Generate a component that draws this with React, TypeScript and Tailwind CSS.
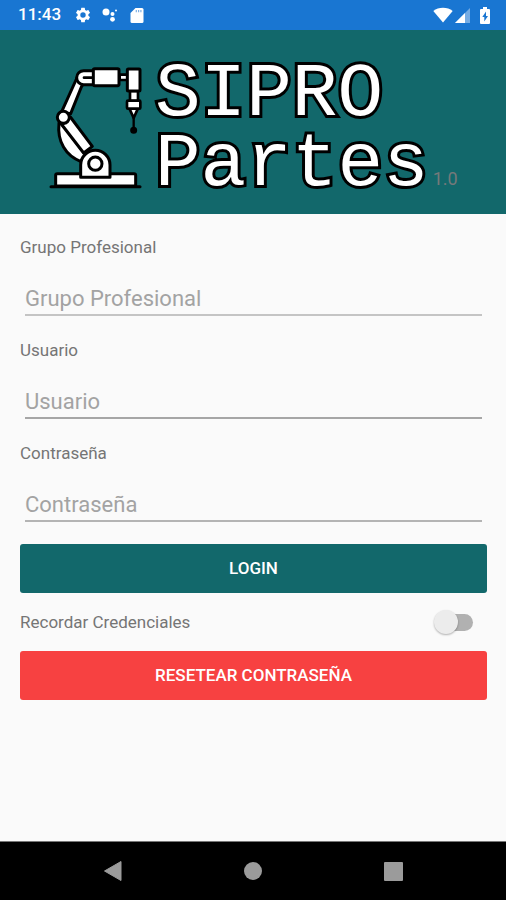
import { useState } from "react";

const FIELDS = [
  { id: "grupo", label: "Grupo Profesional", type: "text", line: "border-[#c4c4c4]" },
  { id: "usuario", label: "Usuario", type: "text", line: "border-[#a6a6a6]" },
  { id: "contrasena", label: "Contraseña", type: "password", line: "border-[#b4b4b4]" },
];

function StatusBar() {
  return (
    <div className="flex h-[30px] items-center bg-[#1976d2] pl-[18px] pr-4 text-white">
      <span className="text-[17px] font-medium">11:43</span>
      <svg viewBox="0 0 24 24" className="ml-[13px] size-[18px]" fill="currentColor">
        <path d="M19.14 12.94c.04-.3.06-.61.06-.94 0-.32-.02-.64-.07-.94l2.03-1.58a.49.49 0 0 0 .12-.61l-1.92-3.32a.49.49 0 0 0-.59-.22l-2.39.96c-.5-.38-1.03-.7-1.62-.94l-.36-2.54a.48.48 0 0 0-.48-.41h-3.84a.47.47 0 0 0-.47.41l-.36 2.54c-.59.24-1.13.57-1.62.94l-2.39-.96a.48.48 0 0 0-.59.22L2.74 8.87a.47.47 0 0 0 .12.61l2.03 1.58c-.05.3-.09.63-.09.94s.02.64.07.94l-2.03 1.58a.49.49 0 0 0-.12.61l1.92 3.32c.12.22.37.29.59.22l2.39-.96c.5.38 1.03.7 1.62.94l.36 2.54c.05.24.24.41.48.41h3.84c.24 0 .44-.17.47-.41l.36-2.54c.59-.24 1.13-.56 1.62-.94l2.39.96c.22.08.47 0 .59-.22l1.92-3.32a.47.47 0 0 0-.12-.61zM12 15.6a3.6 3.6 0 1 1 0-7.2 3.6 3.6 0 0 1 0 7.2z" />
      </svg>
      <svg viewBox="0 0 16 14" className="ml-2.5 h-3.5 w-4" fill="currentColor">
        <circle cx="4" cy="4" r="3.500" />
        <circle cx="10.500" cy="6" r="2" />
        <circle cx="10.500" cy="11.300" r="2.400" />
        <circle cx="14" cy="2.500" r="1" />
      </svg>
      <svg viewBox="0 0 14 17" className="ml-3 h-[17px] w-3.5" fill="currentColor">
        <path d="M5.5 1H12a1.5 1.5 0 0 1 1.5 1.5v12A1.5 1.5 0 0 1 12 16H2a1.5 1.5 0 0 1-1.5-1.5V6z" />
        <path d="M5.7 3h1.2v2.3H5.7zm2.3 0h1.2v2.3H8zm2.3 0h1.2v2.3h-1.2z" fill="#7fb0e4" />
      </svg>
      <div className="ml-auto flex items-center">
        <svg viewBox="0 0 20 16" className="h-4 w-5" fill="currentColor">
          <path d="M10 15.5.3 4C3 1.9 6.3.8 10 .8s7 1.1 9.700 3.200z" />
        </svg>
        <svg viewBox="0 0 15 15" className="ml-0.5 size-[15px]" fill="currentColor">
          <path d="M0 15 15 0v15z" opacity=".4" />
          <path d="M0 15 10 5v10z" />
        </svg>
        <svg viewBox="0 0 10 17" className="ml-2.5 h-[17px] w-2.5" fill="currentColor">
          <path d="M3 0h4v2h2a1 1 0 0 1 1 1v13a1 1 0 0 1-1 1H1a1 1 0 0 1-1-1V3a1 1 0 0 1 1-1h2z" />
          <path d="M6 4.5 2.3 10h2v4.5L8 9H6z" fill="#1976d2" />
        </svg>
      </div>
    </div>
  );
}

function RobotArm() {
  return (
    <svg
      viewBox="25 30 285 375"
      className="h-[125px] w-[95px] shrink-0"
      fill="#fff"
      stroke="#000"
      strokeWidth="9"
      strokeLinejoin="round"
      strokeLinecap="round"
    >
      <path d="M58 204c-6 56 20 98 66 116l14-20L68 208z" />
      <path d="M67 210 132 294l26-20L92 186z" />
      <path d="M113 66 65 172l28 4 32-80 14-22z" />
      <circle cx="71" cy="187" r="18" />
      <path d="M162 47h-30a20 20 0 0 0 0 42h30z" />
      <path d="M158 68h-25" strokeWidth="8" />
      <path d="M240 59h24v16h-24z" strokeWidth="8" />
      <rect x="161" y="41" width="77" height="51" rx="4" />
      <path d="M271 108h24v30h-24z" strokeWidth="8" />
      <rect x="263" y="42" width="38" height="66" rx="3" />
      <path d="m269 160 13 29 13-29z" strokeWidth="8" />
      <path d="M282 187v37" strokeWidth="7" />
      <rect x="262" y="137" width="40" height="24" rx="3" strokeWidth="8" />
      <circle cx="282" cy="226" r="6" fill="#000" />
      <path d="M48 393v-32q0-5 5-5h230q5 0 5 5v32z" />
      <path d="M123 367v-37a44 44 0 0 1 88 0v37z" />
      <circle cx="167" cy="326" r="20" />
      <path d="M34 395h267" />
    </svg>
  );
}

function Header() {
  return (
    <header className="flex h-[184px] items-start bg-[#12686b] pl-12 pt-[35px]">
      <RobotArm />
      <h1 className="ml-3 mt-[-5px] font-['Liberation_Mono',monospace] text-[76px] leading-[70px] text-white [-webkit-text-stroke:6px_#000] [paint-order:stroke_fill] [stroke-linejoin:round]">
        SIPRO
        <br />
        Partes
      </h1>
      <span className="ml-1 mt-[102px] text-lg leading-6 text-[#75797a]">1.0</span>
    </header>
  );
}

function RememberSwitch() {
  const [on, setOn] = useState(false);

  return (
    <div className="flex h-[58px] items-center justify-between pr-3.5">
      <label htmlFor="recordar" className="text-[17px] leading-6">
        Recordar Credenciales
      </label>
      <span className="relative flex h-6 w-[39px] items-center">
        <input
          id="recordar"
          type="checkbox"
          role="switch"
          checked={on}
          onChange={(e) => setOn(e.target.checked)}
          className="peer ml-1 h-[17px] w-[35px] appearance-none rounded-full bg-[#b1b1b1] checked:bg-[#12686b]/50"
        />
        <span className="pointer-events-none absolute left-0 top-0 size-6 rounded-full bg-[#ececec] shadow-[0_1px_2px_rgba(0,0,0,0.3)] peer-checked:left-[15px] peer-checked:bg-[#12686b]" />
      </span>
    </div>
  );
}

function NavBar() {
  return (
    <nav className="flex h-[59px] items-center justify-around border-t border-[#777] bg-black px-[42px] text-[#9b9b9b]">
      <button type="button" aria-label="Atrás">
        <svg viewBox="0 0 20 22" className="h-[22px] w-5" fill="currentColor">
          <path d="M18 1.500v19L1.500 11z" stroke="currentColor" strokeLinejoin="round" />
        </svg>
      </button>
      <button type="button" aria-label="Inicio" className="size-[18px] rounded-full bg-current" />
      <button type="button" aria-label="Recientes" className="size-[19px] rounded-[1px] bg-current" />
    </nav>
  );
}

export default function App() {
  return (
    <div className="flex min-h-screen flex-col bg-[#fafafa] font-[Roboto,sans-serif] text-[#757575]">
      <StatusBar />
      <Header />
      <main className="flex-1 pl-5 pr-[19px] pt-[21px]">
        <form onSubmit={(e) => e.preventDefault()}>
          {FIELDS.map((field) => (
            <div key={field.id} className="mb-[22px]">
              <label htmlFor={field.id} className="block text-[17px] leading-6">
                {field.label}
              </label>
              <div className="mt-[21px] px-[5px]">
                <input
                  id={field.id}
                  type={field.type}
                  placeholder={field.label}
                  className={`block h-9 w-full border-b-2 pt-0.5 text-[22px] text-[#212121] outline-none placeholder:text-[#a3a3a3] ${field.line}`}
                />
              </div>
            </div>
          ))}
          <button
            type="submit"
            className="block h-[49px] w-full rounded-[3px] bg-[#12686b] text-[17px] font-medium text-white"
          >
            LOGIN
          </button>
          <RememberSwitch />
          <button
            type="button"
            className="block h-[49px] w-full rounded-[3px] bg-[#f74141] text-[17px] font-medium text-white"
          >
            RESETEAR CONTRASEÑA
          </button>
        </form>
      </main>
      <NavBar />
    </div>
  );
}
